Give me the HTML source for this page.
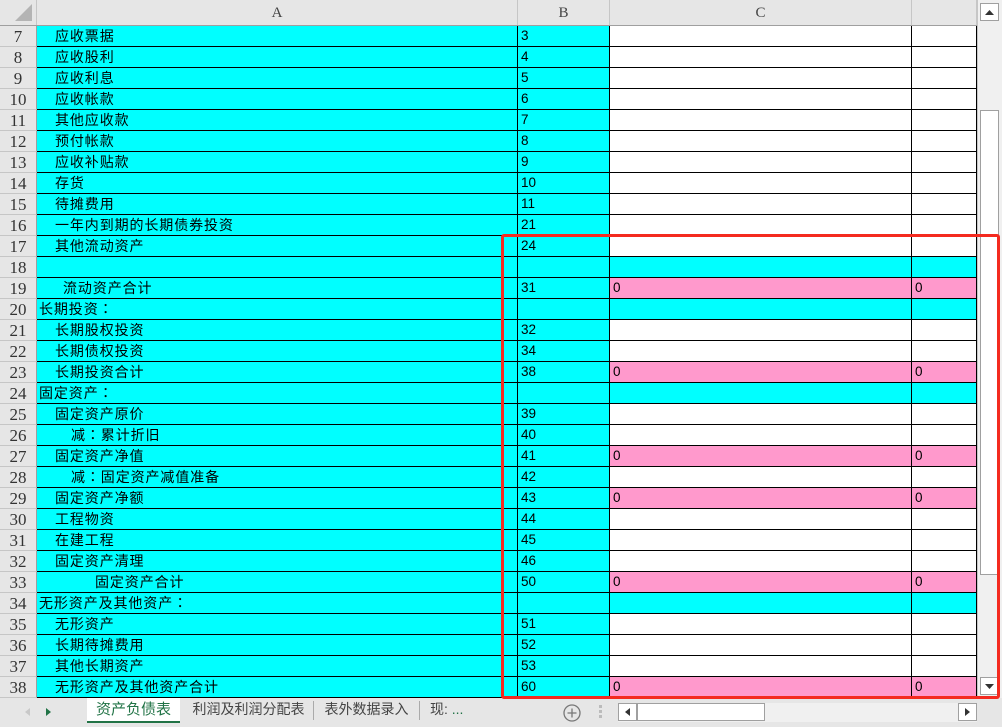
<!DOCTYPE html>
<html><head><meta charset="utf-8"><style>
*{margin:0;padding:0;box-sizing:border-box}
body{width:1002px;height:727px;overflow:hidden;background:#e6e6e6;position:relative;font-family:"Liberation Sans","Noto Sans CJK SC",sans-serif}
.hdr{position:absolute;top:0;left:0;height:26px;width:977px;background:#e6e6e6;border-bottom:1px solid #9f9f9f}
.hdr div{position:absolute;top:0;height:25px;border-right:1px solid #c6c6c6;text-align:center;line-height:26px;font-size:15px;color:#444;font-family:"Liberation Serif",serif}
.grid{position:absolute;top:26px;left:0;width:977px}
.r{display:flex;height:21px}
.r div{height:21px;border-bottom:1px solid #000;border-right:1px solid #000;font-size:14px;line-height:20px;white-space:nowrap;overflow:hidden}
.r .n{width:37px;background:#e6e6e6;border-bottom:1px solid #c6c6c6;border-right:1px solid #9f9f9f;text-align:center;font-family:"Liberation Serif",serif;font-size:17px;color:#333;line-height:21px}
.r .a{width:481px;background:#0ff;letter-spacing:0.9px;font-family:"Liberation Sans","Noto Sans CJK TC",sans-serif}
.r .b{width:92px;background:#0ff;padding-left:3px;font-size:13.5px}
.r .c{width:302px;padding-left:3px;font-size:13.5px}
.r .d{width:65px;padding-left:3px;font-size:13.5px}
.w{background:#fff}.y{background:#0ff}.p{background:#ff99cc}
.vs{position:absolute;left:977px;top:0;width:25px;height:698px;background:#f0f0f0;border-left:1px solid #c6c6c6}
.btn{position:absolute;background:#fff;border:1px solid #a0a0a0}
.tabs{position:absolute;top:698px;left:0;width:1002px;height:29px;background:#e6e6e6;font-size:14px;color:#444}
.tab{position:absolute;top:0;height:25px;line-height:23px}
</style></head><body>
<div class="hdr">
<div style="left:0;width:37px"><svg width="37" height="25"><polygon points="32,4 32,21 15,21" fill="#b4b4b4"/></svg></div>
<div style="left:37px;width:481px">A</div>
<div style="left:518px;width:92px">B</div>
<div style="left:610px;width:302px">C</div>
<div style="left:912px;width:65px"></div>
</div>
<div class="grid">
<div class="r"><div class="n">7</div><div class="a" style="padding-left:18px">应收票据</div><div class="b">3</div><div class="c w"></div><div class="d w"></div></div>
<div class="r"><div class="n">8</div><div class="a" style="padding-left:18px">应收股利</div><div class="b">4</div><div class="c w"></div><div class="d w"></div></div>
<div class="r"><div class="n">9</div><div class="a" style="padding-left:18px">应收利息</div><div class="b">5</div><div class="c w"></div><div class="d w"></div></div>
<div class="r"><div class="n">10</div><div class="a" style="padding-left:18px">应收帐款</div><div class="b">6</div><div class="c w"></div><div class="d w"></div></div>
<div class="r"><div class="n">11</div><div class="a" style="padding-left:18px">其他应收款</div><div class="b">7</div><div class="c w"></div><div class="d w"></div></div>
<div class="r"><div class="n">12</div><div class="a" style="padding-left:18px">预付帐款</div><div class="b">8</div><div class="c w"></div><div class="d w"></div></div>
<div class="r"><div class="n">13</div><div class="a" style="padding-left:18px">应收补贴款</div><div class="b">9</div><div class="c w"></div><div class="d w"></div></div>
<div class="r"><div class="n">14</div><div class="a" style="padding-left:18px">存货</div><div class="b">10</div><div class="c w"></div><div class="d w"></div></div>
<div class="r"><div class="n">15</div><div class="a" style="padding-left:18px">待摊费用</div><div class="b">11</div><div class="c w"></div><div class="d w"></div></div>
<div class="r"><div class="n">16</div><div class="a" style="padding-left:18px">一年内到期的长期债券投资</div><div class="b">21</div><div class="c w"></div><div class="d w"></div></div>
<div class="r"><div class="n">17</div><div class="a" style="padding-left:18px">其他流动资产</div><div class="b">24</div><div class="c w"></div><div class="d w"></div></div>
<div class="r"><div class="n">18</div><div class="a"></div><div class="b"></div><div class="c y"></div><div class="d y"></div></div>
<div class="r"><div class="n">19</div><div class="a" style="padding-left:26px">流动资产合计</div><div class="b">31</div><div class="c p">0</div><div class="d p">0</div></div>
<div class="r"><div class="n">20</div><div class="a" style="padding-left:2px">长期投资：</div><div class="b"></div><div class="c y"></div><div class="d y"></div></div>
<div class="r"><div class="n">21</div><div class="a" style="padding-left:18px">长期股权投资</div><div class="b">32</div><div class="c w"></div><div class="d w"></div></div>
<div class="r"><div class="n">22</div><div class="a" style="padding-left:18px">长期债权投资</div><div class="b">34</div><div class="c w"></div><div class="d w"></div></div>
<div class="r"><div class="n">23</div><div class="a" style="padding-left:18px">长期投资合计</div><div class="b">38</div><div class="c p">0</div><div class="d p">0</div></div>
<div class="r"><div class="n">24</div><div class="a" style="padding-left:2px">固定资产：</div><div class="b"></div><div class="c y"></div><div class="d y"></div></div>
<div class="r"><div class="n">25</div><div class="a" style="padding-left:18px">固定资产原价</div><div class="b">39</div><div class="c w"></div><div class="d w"></div></div>
<div class="r"><div class="n">26</div><div class="a" style="padding-left:34px">减：累计折旧</div><div class="b">40</div><div class="c w"></div><div class="d w"></div></div>
<div class="r"><div class="n">27</div><div class="a" style="padding-left:18px">固定资产净值</div><div class="b">41</div><div class="c p">0</div><div class="d p">0</div></div>
<div class="r"><div class="n">28</div><div class="a" style="padding-left:34px">减：固定资产减值准备</div><div class="b">42</div><div class="c w"></div><div class="d w"></div></div>
<div class="r"><div class="n">29</div><div class="a" style="padding-left:18px">固定资产净额</div><div class="b">43</div><div class="c p">0</div><div class="d p">0</div></div>
<div class="r"><div class="n">30</div><div class="a" style="padding-left:18px">工程物资</div><div class="b">44</div><div class="c w"></div><div class="d w"></div></div>
<div class="r"><div class="n">31</div><div class="a" style="padding-left:18px">在建工程</div><div class="b">45</div><div class="c w"></div><div class="d w"></div></div>
<div class="r"><div class="n">32</div><div class="a" style="padding-left:18px">固定资产清理</div><div class="b">46</div><div class="c w"></div><div class="d w"></div></div>
<div class="r"><div class="n">33</div><div class="a" style="padding-left:58px">固定资产合计</div><div class="b">50</div><div class="c p">0</div><div class="d p">0</div></div>
<div class="r"><div class="n">34</div><div class="a" style="padding-left:2px">无形资产及其他资产：</div><div class="b"></div><div class="c y"></div><div class="d y"></div></div>
<div class="r"><div class="n">35</div><div class="a" style="padding-left:18px">无形资产</div><div class="b">51</div><div class="c w"></div><div class="d w"></div></div>
<div class="r"><div class="n">36</div><div class="a" style="padding-left:18px">长期待摊费用</div><div class="b">52</div><div class="c w"></div><div class="d w"></div></div>
<div class="r"><div class="n">37</div><div class="a" style="padding-left:18px">其他长期资产</div><div class="b">53</div><div class="c w"></div><div class="d w"></div></div>
<div class="r"><div class="n">38</div><div class="a" style="padding-left:18px">无形资产及其他资产合计</div><div class="b">60</div><div class="c p">0</div><div class="d p">0</div></div>
</div>
<div class="vs">
<div class="btn" style="left:2px;top:3px;width:19px;height:18px"><svg width="17" height="16"><polygon points="4,11 13,11 8.5,6" fill="#333"/></svg></div>
<div class="btn" style="left:2px;top:110px;width:19px;height:465px"></div>
<div class="btn" style="left:2px;top:677px;width:19px;height:18px"><svg width="17" height="16"><polygon points="4,6 13,6 8.5,11" fill="#333"/></svg></div>
</div>
<div class="tabs">
<svg style="position:absolute;left:22px;top:8px" width="30" height="12"><polygon points="8,2 3,6 8,10" fill="#c8c8c8"/><polygon points="34,2 39,6 34,10" fill="#217346" transform="translate(-10,0)"/></svg>
<div class="tab" style="left:87px;width:93px;background:#fff;border-bottom:2px solid #217346;color:#217346;text-align:center;font-size:15px">资产负债表</div>
<div class="tab" style="left:184px;width:130px;text-align:center;border-right:1px solid #aaa;top:3px;height:19px;line-height:17px">利润及利润分配表</div>
<div class="tab" style="left:314px;width:106px;text-align:center;border-right:1px solid #aaa;top:3px;height:19px;line-height:17px">表外数据录入</div>
<div class="tab" style="left:430px;top:3px;line-height:17px">现: <span style="color:#217346">...</span></div>
<svg style="position:absolute;left:562px;top:5px" width="20" height="20"><circle cx="10" cy="10" r="8" fill="none" stroke="#777" stroke-width="1.3"/><path d="M10 5.5v9M5.5 10h9" stroke="#777" stroke-width="1.3"/></svg>
<svg style="position:absolute;left:598px;top:6px" width="5" height="16"><rect x="1" y="1" width="3" height="3" fill="#bbb"/><rect x="1" y="6" width="3" height="3" fill="#bbb"/><rect x="1" y="11" width="3" height="3" fill="#bbb"/></svg>
<div style="position:absolute;left:618px;top:5px;width:359px;height:19px;background:#f0f0f0"></div>
<div class="btn" style="left:618px;top:5px;width:19px;height:18px"><svg width="17" height="16"><polygon points="11,4 11,12 6,8" fill="#333"/></svg></div>
<div class="btn" style="left:637px;top:5px;width:128px;height:18px"></div>
<div class="btn" style="left:958px;top:5px;width:19px;height:18px"><svg width="17" height="16"><polygon points="6,4 6,12 11,8" fill="#333"/></svg></div>
</div>
<div style="position:absolute;left:501px;top:234px;width:499px;height:465px;border:3px solid #f42a1f;border-radius:3px"></div>
</body></html>
